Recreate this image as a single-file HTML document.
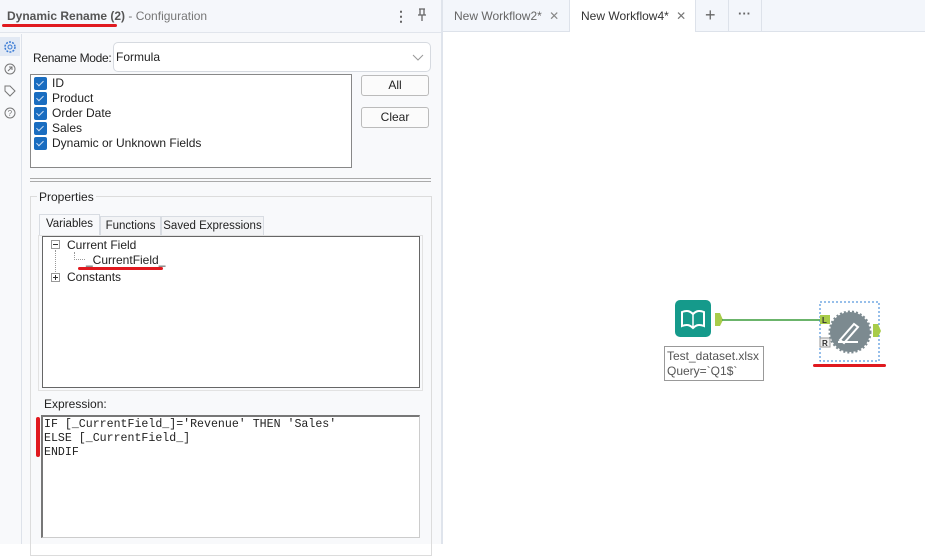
<!DOCTYPE html>
<html><head><meta charset="utf-8"><style>
*{box-sizing:border-box;margin:0;padding:0}
body{width:925px;height:544px;overflow:hidden;position:relative;background:#fff;font-family:"Liberation Sans",sans-serif;font-size:12px;color:#222}
.a{position:absolute;white-space:nowrap}
.cb{position:absolute;left:3px;width:13px;height:13px;background:#1a6dc0;border-radius:2px}
.cb:after{content:"";position:absolute;left:4px;top:2px;width:3px;height:6px;border:solid #cfe0f5;border-width:0 1px 1px 0;transform:rotate(45deg)}
.row{position:absolute;left:21px;font-size:12px;white-space:nowrap}
.btn{position:absolute;background:#fbfbfb;border:1px solid #bbb;border-radius:3px;text-align:center;font-size:12px;line-height:19px}
.tab{position:absolute;border:1px solid #d8dce2;border-bottom:none;background:#f3f4f6;text-align:center;font-size:11.5px;line-height:18px;white-space:nowrap}
.mono{font-family:"Liberation Mono","DejaVu Sans Mono",monospace;font-size:11.6px;line-height:14px}
</style></head><body>
<div class="a" style="left:0;top:0;width:441px;height:544px;background:#f8f9fb"></div>
<div class="a" style="left:0;top:0;width:441px;height:33px;background:#f5f7fb;border-bottom:1px solid #e1e5ec"></div>
<div class="a" style="left:7px;top:9px;font-size:12px;color:#555"><b>Dynamic Rename (2)</b> <span style="color:#777">- Configuration</span></div>
<div class="a" style="left:2px;top:24px;width:115px;height:3px;background:#e0191f;border-radius:2px"></div>
<div class="a" style="left:394px;top:8px;color:#666;font-size:14px;font-weight:bold">⋮</div>
<svg class="a" style="left:416px;top:8px" width="12" height="14"><path d="M3 1h6M4 1v6M8 1v6M2 7h8M6 7v6" stroke="#666" stroke-width="1.3" fill="none"/></svg>
<div class="a" style="left:21px;top:34px;width:1px;height:510px;background:#dde2ea"></div>
<div class="a" style="left:0;top:37px;width:20px;height:19px;background:#e2e9f4"></div>
<svg class="a" style="left:3px;top:40px" width="14" height="14"><circle cx="7" cy="7" r="5" stroke="#3a7bd5" stroke-width="1.5" fill="none" stroke-dasharray="2 1.2"/><circle cx="7" cy="7" r="2" stroke="#3a7bd5" fill="none"/></svg>
<svg class="a" style="left:3px;top:62px" width="14" height="14"><circle cx="7" cy="7" r="5" stroke="#777" fill="none"/><path d="M5 9l4-4M6 5h3v3" stroke="#777" fill="none"/></svg>
<svg class="a" style="left:3px;top:84px" width="14" height="14"><path d="M2 2h5l5 5-5 5-5-5z" stroke="#777" fill="none"/></svg>
<svg class="a" style="left:3px;top:106px" width="14" height="14"><circle cx="7" cy="7" r="5" stroke="#777" fill="none"/><text x="4.6" y="10" font-size="8" fill="#777" font-family="Liberation Sans">?</text></svg>

<div class="a" style="left:113px;top:42px;width:318px;height:30px;background:#fff;border:1px solid #d6dae0;border-radius:5px"></div>
<div class="a" style="left:33px;top:51px;font-size:12px;letter-spacing:-0.3px">Rename Mode:</div>
<div class="a" style="left:116px;top:50px;font-size:12px">Formula</div>
<svg class="a" style="left:412px;top:54px" width="12" height="8"><path d="M1 1l5 5 5-5" stroke="#999" fill="none"/></svg>

<div class="a" style="left:30px;top:74px;width:322px;height:94px;background:#fff;border:1px solid #888">
 <div class="cb" style="top:2px"></div><div class="row" style="top:1px">ID</div>
 <div class="cb" style="top:17px"></div><div class="row" style="top:16px">Product</div>
 <div class="cb" style="top:32px"></div><div class="row" style="top:31px">Order Date</div>
 <div class="cb" style="top:47px"></div><div class="row" style="top:46px">Sales</div>
 <div class="cb" style="top:62px"></div><div class="row" style="top:61px">Dynamic or Unknown Fields</div>
</div>
<div class="btn" style="left:361px;top:75px;width:68px;height:21px">All</div>
<div class="btn" style="left:361px;top:107px;width:68px;height:21px">Clear</div>
<div class="a" style="left:30px;top:178px;width:401px;height:4px;border-top:1px solid #aaa;border-bottom:1px solid #aaa"></div>

<div class="a" style="left:30px;top:196px;width:402px;height:360px;border:1px solid #dcdcdc"></div>
<div class="a" style="left:37px;top:190px;background:#f8f9fb;padding:0 2px;font-size:12px">Properties</div>
<div class="tab" style="left:39px;top:214px;width:61px;height:22px;background:#f8f9fb">Variables</div>
<div class="tab" style="left:100px;top:216px;width:61px;height:20px">Functions</div>
<div class="tab" style="left:161px;top:216px;width:103px;height:20px">Saved Expressions</div>
<div class="a" style="left:38px;top:235px;width:385px;height:156px;border:1px solid #e2e2e2"></div>
<div class="a" style="left:42px;top:236px;width:378px;height:152px;background:#fff;border:1px solid #666"></div>
<div class="a" style="left:51px;top:240px;width:9px;height:9px;border:1px solid #999;background:#fff"></div><div class="a" style="left:53px;top:244px;width:5px;height:1px;background:#333"></div>
<div class="a" style="left:67px;top:238px;font-size:12px">Current Field</div>
<div class="a" style="left:55px;top:250px;height:22px;border-left:1px dotted #999"></div>
<div class="a" style="left:74px;top:252px;width:11px;height:8px;border-left:1px dotted #999;border-bottom:1px dotted #999"></div>
<div class="a" style="left:86px;top:253px;font-size:12px">_CurrentField_</div>
<div class="a" style="left:78px;top:267px;width:85px;height:3px;background:#e0191f;border-radius:2px"></div>
<div class="a" style="left:51px;top:273px;width:9px;height:9px;border:1px solid #999;background:#fff"></div><div class="a" style="left:53px;top:277px;width:5px;height:1px;background:#333"></div><div class="a" style="left:55px;top:275px;width:1px;height:5px;background:#333"></div>
<div class="a" style="left:67px;top:270px;font-size:12px">Constants</div>
<div class="a" style="left:44px;top:397px;font-size:12px">Expression:</div>
<div class="a" style="left:41px;top:415px;width:379px;height:123px;background:#fff;border:1px solid #ccc;border-left:2px solid #777;border-top:2px solid #777"></div>
<div class="a mono" style="left:44px;top:418px;white-space:pre">IF [_CurrentField_]='Revenue' THEN 'Sales'
ELSE [_CurrentField_]
ENDIF</div>
<div class="a" style="left:36px;top:417px;width:4px;height:40px;background:#e0191f;border-radius:2px"></div>

<div class="a" style="left:441px;top:0;width:2px;height:544px;background:#dfe4ec"></div>
<div class="a" style="left:443px;top:0;width:482px;height:32px;background:#f3f6fb;border-bottom:1px solid #dde2ea"></div>
<div class="a" style="left:454px;top:9px;font-size:12px;color:#666">New Workflow2* <span style="color:#888;margin-left:4px">✕</span></div>
<div class="a" style="left:569px;top:0;width:127px;height:32px;background:#fff;border-left:1px solid #dde2ea;border-right:1px solid #dde2ea"></div>
<div class="a" style="left:581px;top:9px;font-size:12px;color:#333">New Workflow4* <span style="color:#777;margin-left:4px">✕</span></div>
<div class="a" style="left:728px;top:0;width:1px;height:32px;background:#dde2ea"></div>
<div class="a" style="left:761px;top:0;width:1px;height:32px;background:#dde2ea"></div>
<div class="a" style="left:705px;top:5px;font-size:18px;color:#666">+</div>
<div class="a" style="left:738px;top:6px;font-size:13px;color:#666;font-weight:bold">···</div>

<svg class="a" style="left:660px;top:295px" width="240" height="90">
 <rect x="15" y="5" width="36" height="37" rx="5" fill="#159a8b"/>
 <path d="M22 17c5-2 8-1 11 2c3-3 6-4 11-2v14c-5-2-8-1-11 2c-3-3-6-4-11-2z" fill="none" stroke="#fff" stroke-width="2"/>
 <path d="M33 19v14" stroke="#fff" stroke-width="1.5"/>
 <path d="M55 18h5l3 7-3 6h-5z" fill="#a8cc4a"/>
 <line x1="62" y1="25" x2="160" y2="25" stroke="#3a9b3a" stroke-width="1.5"/>
 <rect x="160" y="7" width="59" height="59" fill="none" stroke="#2f7fd6" stroke-dasharray="2 2"/>
 <rect x="160" y="20" width="10" height="9" fill="#a8cc4a"/><text x="162" y="28" font-size="8" font-weight="bold" font-family="Liberation Sans" fill="#333">L</text>
 <rect x="160" y="43" width="10" height="9" fill="#eee" stroke="#999"/><text x="162" y="51" font-size="8" font-weight="bold" font-family="Liberation Sans" fill="#333">R</text>
 <circle cx="190" cy="37" r="20" fill="#7c8a90" stroke="#7c8a90" stroke-width="3" stroke-dasharray="2 2"/>
 <circle cx="190" cy="37" r="18" fill="#7c8a90"/>
 <path d="M180 45l14-16 4 3-14 16zM178 47h20" stroke="#fff" stroke-width="2" fill="none"/>
 <path d="M213 29h5l3 7-3 6h-5z" fill="#a8cc4a"/>
 <rect x="4.5" y="51.5" width="99" height="34" fill="#fff" stroke="#999"/>
 <text x="7" y="65" font-size="12" font-family="Liberation Sans" fill="#555">Test_dataset.xlsx</text>
 <text x="7" y="80" font-size="12" font-family="Liberation Sans" fill="#555">Query=`Q1$`</text>
 <rect x="153" y="69" width="73" height="3" rx="1.5" fill="#e0191f"/>
</svg>
</body></html>
